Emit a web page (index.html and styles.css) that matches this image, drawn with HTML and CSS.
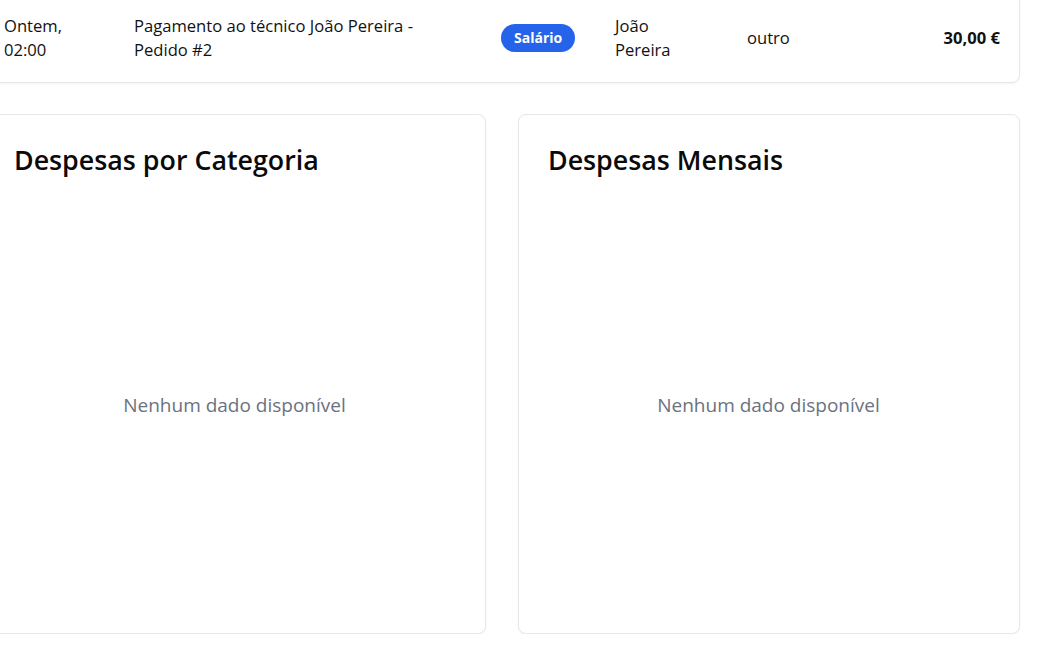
FILE: index.html
```html
<!DOCTYPE html>
<html lang="pt">
<head>
<meta charset="utf-8">
<title>Despesas</title>
<link rel="stylesheet" href="styles.css">
</head>
<body>
<main class="page">
  <section class="card table-card">
    <div class="row">
      <div class="cell date">Ontem, 02:00</div>
      <div class="cell desc">Pagamento ao técnico João Pereira - Pedido #2</div>
      <div class="cell cat"><span class="badge">Salário</span></div>
      <div class="cell user">João Pereira</div>
      <div class="cell type">outro</div>
      <div class="cell amount">30,00 €</div>
    </div>
  </section>
  <div class="charts">
    <section class="card chart-card">
      <h2 class="chart-title">Despesas por Categoria</h2>
      <div class="chart-empty">Nenhum dado disponível</div>
    </section>
    <section class="card chart-card">
      <h2 class="chart-title">Despesas Mensais</h2>
      <div class="chart-empty">Nenhum dado disponível</div>
    </section>
  </div>
</main>
</body>
</html>
```

FILE: styles.css
```css
html, body {
  margin: 0;
  padding: 0;
  background: #ffffff;
  overflow: hidden;
}
body {
  font-family: "Open Sans", "Noto Sans", "Liberation Sans", sans-serif;
  color: #111111;
  font-size: 16.6px;
}
.page {
  width: 1036px;
  margin: -7px 0 0 -16px;
}
.card {
  background: #fff;
  border: 1px solid #e5e7eb;
  border-radius: 8px;
  box-shadow: 0 1px 2px rgba(0,0,0,0.05);
}
.row {
  display: grid;
  grid-template-columns: 130px 367px 114px 132px 1fr auto;
  align-items: center;
  padding: 20px 19px 20px 19px;
  line-height: 24px;
}
.date { max-width: 70px; }
.desc { max-width: 310px; }
.user { max-width: 70px; }
.amount { font-weight: 700; text-align: right; }
.badge {
  display: inline-block;
  background: #2563eb;
  color: #fff;
  font-weight: 700;
  font-size: 14px;
  line-height: 28px;
  padding: 0 13px;
  border-radius: 999px;
}
.charts {
  display: grid;
  grid-template-columns: 1fr 1fr;
  gap: 32px;
  margin-top: 31px;
}
.chart-card {
  padding: 27px 30px 28px 29px;
}
.chart-title {
  margin: 0 0 27px;
  font-size: 26.8px;
  line-height: 36px;
  font-weight: 600;
  color: #0a0a0a;
}
.chart-empty {
  height: 400px;
  display: flex;
  align-items: center;
  justify-content: center;
  color: #6b7280;
  font-size: 19px;
}
```
